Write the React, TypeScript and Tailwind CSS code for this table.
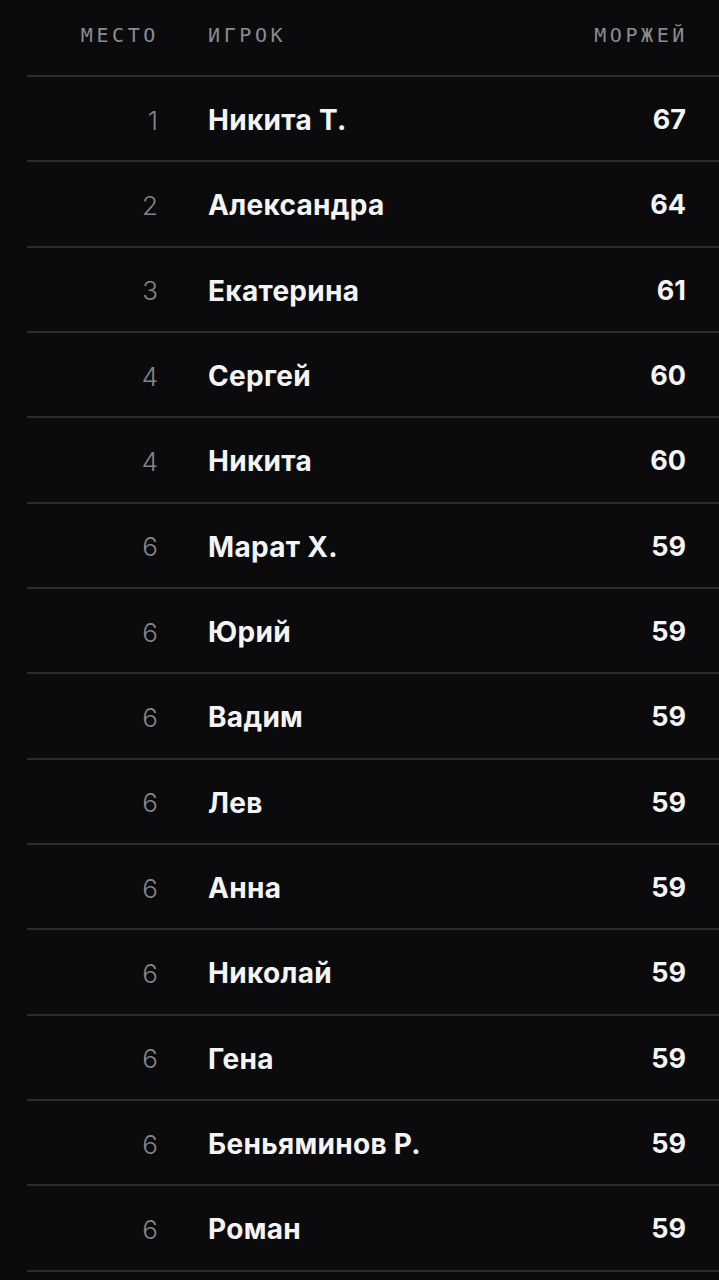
const rows: { place: number; name: string; score: number }[] = [
  { place: 1, name: 'Никита Т.', score: 67 },
  { place: 2, name: 'Александра', score: 64 },
  { place: 3, name: 'Екатерина', score: 61 },
  { place: 4, name: 'Сергей', score: 60 },
  { place: 4, name: 'Никита', score: 60 },
  { place: 6, name: 'Марат Х.', score: 59 },
  { place: 6, name: 'Юрий', score: 59 },
  { place: 6, name: 'Вадим', score: 59 },
  { place: 6, name: 'Лев', score: 59 },
  { place: 6, name: 'Анна', score: 59 },
  { place: 6, name: 'Николай', score: 59 },
  { place: 6, name: 'Гена', score: 59 },
  { place: 6, name: 'Беньяминов Р.', score: 59 },
  { place: 6, name: 'Роман', score: 59 },
];

export default function App() {
  return (
    <div className="min-h-screen bg-[#0b0b0d] pl-[27px] font-['Inter',sans-serif]">
      <div className="flex h-[77px] items-center border-b-2 border-[#2a2b2f] pb-[6px] font-['DejaVu_Sans_Mono','Liberation_Mono',monospace] text-[20px] uppercase tracking-[3.6px] text-[#8b8c90]">
        <div className="w-[132px] text-right">Место</div>
        <div className="ml-[49px] flex-1">Игрок</div>
        <div className="pr-[31px]">Моржей</div>
      </div>
      {rows.map((r, i) => (
        <div key={i} className="flex h-[85.33px] items-center border-b-2 border-[#2a2b2f] pt-[3px]">
          <div className="w-[131px] text-right text-[26px] font-light text-[#85868a]">{r.place}</div>
          <div className="ml-[50px] flex-1 text-[28px] font-bold tracking-[0.3px] text-[#f4f4f5]">{r.name}</div>
          <div className="pr-[33px] text-[27px] font-bold text-[#f4f4f5]">{r.score}</div>
        </div>
      ))}
    </div>
  );
}
